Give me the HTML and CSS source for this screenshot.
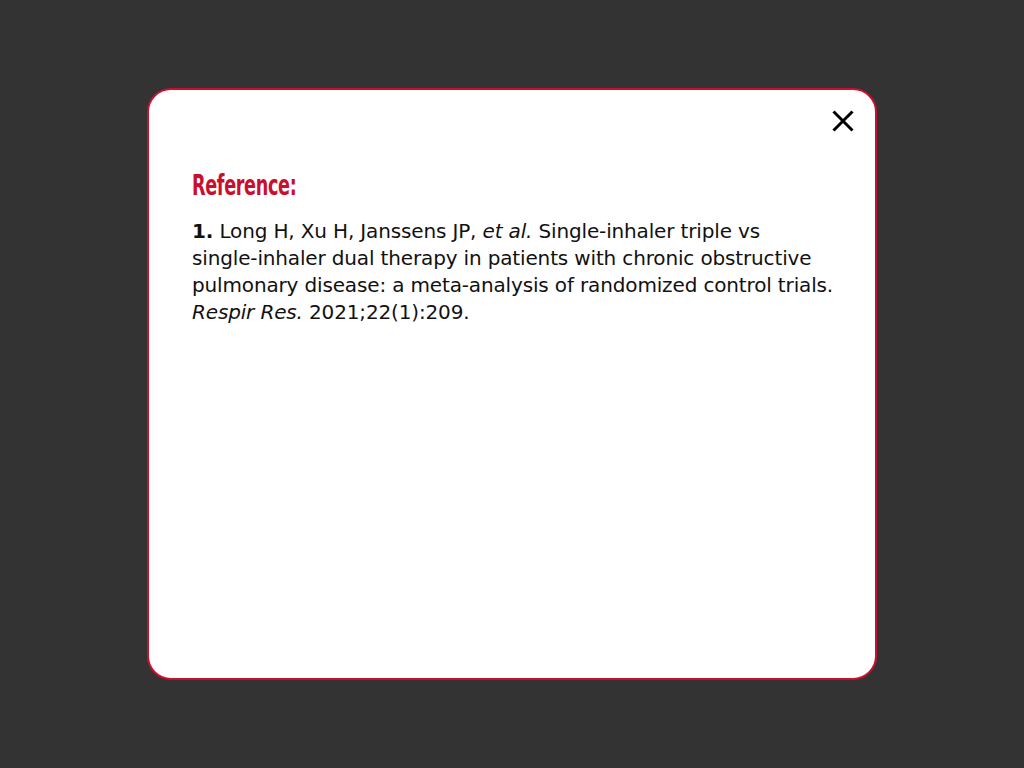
FILE: index.html
```html
<!DOCTYPE html>
<html lang="en">
<head>
<meta charset="utf-8">
<title>Reference</title>
<link rel="stylesheet" href="styles.css">
</head>
<body>
<div class="overlay">
  <div class="modal">
    <button class="close" aria-label="Close">
      <svg width="22" height="22" viewBox="0 0 22 22"><path d="M1.5 1.5 L20.5 20.5 M20.5 1.5 L1.5 20.5" stroke="#000" stroke-width="3" fill="none"/></svg>
    </button>
    <h2 class="title"><span>Reference:</span></h2>
    <p class="ref"><b>1.</b> Long H, Xu H, Janssens JP, <i>et al.</i> <span class="nw">Single-inhaler</span> triple vs <span class="nw">single-inhaler</span> dual therapy in patients with chronic obstructive pulmonary disease: a <span class="nw">meta-analysis</span> of randomized control trials. <i>Respir Res.</i> 2021;22(1):209.</p>
  </div>
</div>
</body>
</html>
```
FILE: styles.css
```css
html, body {
  margin: 0;
  padding: 0;
  height: 100%;
  background: #333333;
}
.overlay {
  height: 100%;
  display: flex;
  align-items: center;
  justify-content: center;
}
.modal {
  position: relative;
  box-sizing: border-box;
  width: 730px;
  height: 592px;
  background: #fff;
  border: 2px solid #c8102e;
  border-radius: 24px;
  padding: 80px 28px 0 43px;
}
.close {
  position: absolute;
  top: 20px;
  right: 21px;
  width: 22px;
  height: 22px;
  padding: 0;
  border: 0;
  background: none;
  cursor: pointer;
}
.close svg { display: block; }
.title {
  margin: 0 0 16px;
  font-family: "DejaVu Sans Condensed", "DejaVu Sans", sans-serif;
  font-stretch: condensed;
  font-weight: bold;
  font-size: 28px;
  letter-spacing: -0.5px;
  line-height: 32px;
  color: #c8102e;
}
.title span {
  display: inline-block;
  transform: scaleX(0.70);
  transform-origin: left center;
}
.ref {
  margin: 0;
  font-family: "DejaVu Sans", sans-serif;
  font-size: 20px;
  letter-spacing: -0.15px;
  line-height: 27px;
  color: #111;
}
.ref b { font-weight: bold; }
.nw { white-space: nowrap; }
```
